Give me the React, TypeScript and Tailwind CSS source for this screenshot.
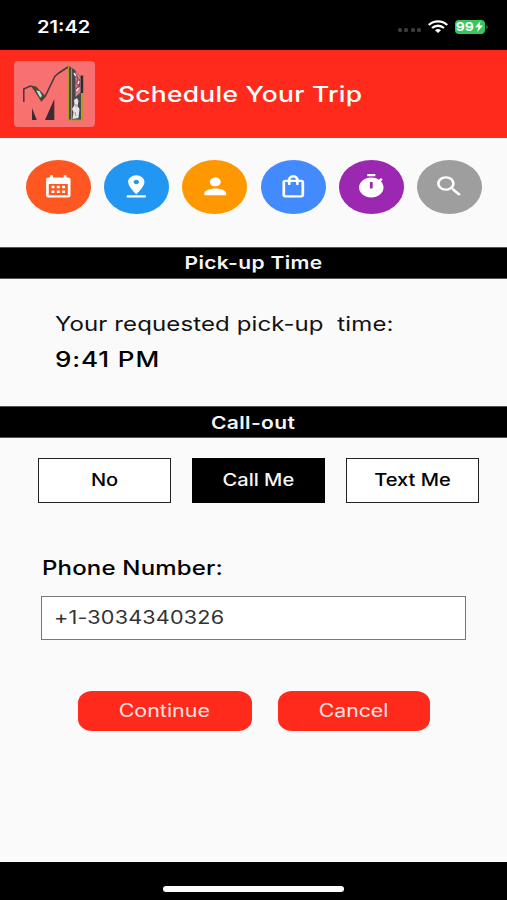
import type { ReactNode } from "react";

function Glyph({ children }: { children: ReactNode }) {
  return (
    <svg viewBox="0 0 24 24" preserveAspectRatio="none" className="h-[26.7px] w-[32.6px]" fill="#fff">
      {children}
    </svg>
  );
}

function Step({ color, children }: { color: string; children: ReactNode }) {
  return (
    <button className={`flex h-[53.5px] w-[65px] items-center justify-center rounded-[50%] ${color}`}>
      {children}
    </button>
  );
}

function SectionBar({ children }: { children: ReactNode }) {
  return (
    <div className="flex h-8 shrink-0 items-center justify-center border-y border-[#555] bg-black pt-px font-semibold text-[17.5px] leading-none text-[#f5f5f5]">
      {children}
    </div>
  );
}

function Logo() {
  return (
    <svg viewBox="0 0 81 66" className="h-[66px] w-[81px] rounded-[4px] bg-[#f87171]">
      <path d="M9.800 41V28l6.500-3 5.500 1.500 6 12.500 3.500-4 9.500-19.500 4-3.500L54 6" fill="none" stroke="#4a3a3b" strokeWidth="1.6" />
      <path d="M17 25l5.500 1 8.500 8.500-3.600 6.500L23 34z" fill="#4a4a2c" />
      <path d="M22.300 29.500l3.200.5 2.600 5-2 1.500z" fill="#b5e2f7" />
      <path d="M18 47l4.800 12H18zM40.300 38v21H31z" fill="#3a2c33" />
      <path d="M54 4.500l7 4.500 6 8v42H54z" fill="#4b464a" />
      <path d="M61.500 10l5.500 7v14l-5.500 5z" fill="#c9868d" />
      <path d="M66.600 14.500h2.600V32h-2.600z" fill="#2d2a30" />
      <path d="M54.500 5v54M57.500 7.500V59M68.300 32v27H54" fill="none" stroke="#a89b22" strokeWidth="1.1" />
      <path d="M62.500 14l1.500 4-1.500 4 2.500 3-3 3M65.500 18v8" fill="none" stroke="#a83850" strokeWidth="1.2" />
      <path d="M65 20l-1 3M64.500 27l-2 3M60 12l1.500 3" fill="none" stroke="#fff" strokeWidth="1.3" />
      <path d="M60 39l3-2 1.500 3-1 5 2 3-1 9-6 1 1-7-1.500-3 2.500-4z" fill="#e5e3e3" />
      <path d="M62 43v3M61 51l1 4" stroke="#9d989c" strokeWidth="1" />
    </svg>
  );
}

export default function App() {
  return (
    <div className="flex h-[900px] w-[507px] flex-col overflow-hidden bg-[#fafafa] font-['Inter',sans-serif] text-black">
      <div className="flex h-[49.5px] shrink-0 items-center bg-black pl-[37px] pr-[19px] pt-[4px] text-white">
        <span className="origin-left scale-x-[1.18] whitespace-pre pt-px text-[17px] leading-none font-semibold">21:42</span>
        <div className="ml-auto flex items-center">
          <div className="mr-[7px] mt-[7px] flex gap-[2.5px]">
            <i className="size-[4px] rounded-[1.5px] bg-[#3c3c3c]" />
            <i className="size-[4px] rounded-[1.5px] bg-[#3c3c3c]" />
            <i className="size-[4px] rounded-[1.5px] bg-[#3c3c3c]" />
            <i className="size-[4px] rounded-[1.5px] bg-[#3c3c3c]" />
          </div>
          <svg viewBox="0 0 20 13" className="mr-[7px] h-[13px] w-5" fill="none" stroke="#fff" strokeWidth="2.3">
            <path d="M.8 5C6 .2 14 .2 19.200 5M4 8c3.500-3 8.500-3 12 0" />
            <path d="M7 10.200c1.700-1.500 4.300-1.500 6 0l-3 2.800z" fill="#fff" stroke="none" />
          </svg>
          <div className="flex h-[13.5px] w-[30px] items-center justify-center rounded-[4px] bg-[#34c759]">
            <span className="scale-x-[1.15] text-[12px] leading-none font-bold">99</span>
            <svg viewBox="0 0 8 11" className="ml-[2px] h-[11px] w-[8px]" fill="#fff">
              <path d="M5.500 0L0 6.200h3.300L2.300 11 8 4.600H4.600z" />
            </svg>
          </div>
          <i className="ml-[1px] h-[4px] w-[2px] rounded-r-full bg-[#444]" />
        </div>
      </div>

      <header className="flex h-[88.5px] shrink-0 items-center bg-[#ff2a1b] pl-[14.400px] text-white">
        <Logo />
        <h1 className="ml-[23px] origin-left scale-x-[1.2] whitespace-pre text-[22px] leading-none font-medium tracking-[0.22px]">Schedule Your Trip</h1>
      </header>

      <nav className="flex h-[108.5px] shrink-0 justify-between pl-[26px] pr-[25px] pt-[22px]">
        <Step color="bg-[#ff5722]">
          <Glyph>
            <path
              fillRule="evenodd"
              d="M6 2h2v2h8V2h2v2h1a2 2 0 0 1 2 2v14a2 2 0 0 1-2 2H5a2 2 0 0 1-2-2V6a2 2 0 0 1 2-2h1zM5 9.800V20h14V9.800zM7 11.500h2.200v2.300H7zm3.900 0h2.200v2.300h-2.200zm3.900 0H17v2.300h-2.200zM7 15.700h2.200V18H7zm3.900 0h2.200V18h-2.200zm3.900 0H17V18h-2.200z"
            />
          </Glyph>
        </Step>
        <Step color="bg-[#2196f3]">
          <Glyph>
            <path d="M18 8c0-3.310-2.690-6-6-6S6 4.690 6 8c0 4.500 6 11 6 11s6-6.500 6-11zm-8 0c0-1.100.9-2 2-2s2 .9 2 2-.89 2-2 2c-1.100 0-2-.9-2-2zM5 20v2h14v-2H5z" />
          </Glyph>
        </Step>
        <Step color="bg-[#ff9800]">
          <Glyph>
            <path d="M12 12c2.210 0 4-1.790 4-4s-1.790-4-4-4-4 1.790-4 4 1.790 4 4 4zm0 2c-2.670 0-8 1.340-8 4v2h16v-2c0-2.660-5.330-4-8-4z" />
          </Glyph>
        </Step>
        <Step color="bg-[#448aff]">
          <Glyph>
            <path d="M18 6h-2c0-2.210-1.790-4-4-4S8 3.790 8 6H6c-1.100 0-2 .9-2 2v12c0 1.100.9 2 2 2h12c1.100 0 2-.9 2-2V8c0-1.100-.9-2-2-2zm-6-2c1.100 0 2 .9 2 2h-4c0-1.100.9-2 2-2zm6 16H6V8h2v2c0 .55.450 1 1 1s1-.45 1-1V8h4v2c0 .55.450 1 1 1s1-.45 1-1V8h2v12z" />
          </Glyph>
        </Step>
        <Step color="bg-[#9c27b0]">
          <Glyph>
            <path
              fillRule="evenodd"
              d="M15 1H9v2h6V1zm4.030 6.390l1.420-1.420c-.43-.51-.9-.99-1.410-1.410l-1.420 1.420C16.070 4.740 14.120 4 12 4c-4.970 0-9 4.030-9 9s4.020 9 9 9 9-4.030 9-9c0-2.120-.74-4.070-1.970-5.610zM13 14h-2V8h2v6z"
            />
          </Glyph>
        </Step>
        <Step color="bg-[#9e9e9e]">
          <Glyph>
            <path d="M15.500 14h-.79l-.28-.27C15.410 12.590 16 11.110 16 9.500 16 5.910 13.090 3 9.500 3S3 5.910 3 9.500 5.910 16 9.500 16c1.610 0 3.090-.59 4.230-1.570l.27.280v.79l5 4.990L20.490 19l-4.990-5zm-6 0C7.010 14 5 11.990 5 9.500S7.010 5 9.500 5 14 7.010 14 9.500 11.990 14 9.500 14z" />
          </Glyph>
        </Step>
      </nav>

      <SectionBar>
        <span className="scale-x-[1.2] whitespace-pre tracking-[0.3px]">Pick-up Time</span>
      </SectionBar>

      <section className="flex h-[127.500px] shrink-0 flex-col items-start pl-[55px] pt-[35.500px]">
        <p className="origin-left scale-x-[1.2] whitespace-pre text-[20px] leading-5 tracking-[0.09px] text-[#111]">{"Your requested pick-up  time:"}</p>
        <p className="mt-[16px] origin-left scale-x-[1.24] whitespace-pre text-[21px] leading-5 font-medium tracking-[0.7px]">9:41 PM</p>
      </section>

      <SectionBar>
        <span className="scale-x-[1.2] whitespace-pre tracking-[0.3px]">Call-out</span>
      </SectionBar>

      <div className="mt-5 flex h-[44.500px] shrink-0 gap-[21.500px] pl-[38.400px] text-[17px] leading-none font-medium">
        <button className="flex w-[132.500px] items-center justify-center border border-[#222] bg-white">
          <span className="scale-x-[1.18] whitespace-pre">No</span>
        </button>
        <button className="flex w-[132.500px] items-center justify-center bg-black text-[#f5f5f5]">
          <span className="scale-x-[1.18] whitespace-pre">Call Me</span>
        </button>
        <button className="flex w-[132.500px] items-center justify-center border border-[#222] bg-white">
          <span className="scale-x-[1.18] whitespace-pre">Text Me</span>
        </button>
      </div>

      <div className="mt-[55px] flex shrink-0 flex-col items-start pl-[41.400px]">
        <label className="ml-[0.5px] origin-left scale-x-[1.2] whitespace-pre text-[20px] leading-5 font-medium tracking-[0.15px]">Phone Number:</label>
        <div className="mt-[18px] flex h-[44.500px] w-[425px] items-center border border-[#777] bg-white pl-[12px] text-[18px] leading-none text-[#333]">
          <span className="origin-left scale-x-[1.2] whitespace-pre tracking-[0.15px]">+1-3034340326</span>
        </div>
      </div>

      <div className="mt-[50.500px] flex h-10 shrink-0 gap-[26.500px] pl-[78px] text-[18px] leading-none text-[#ffe3e0]">
        <button className="flex w-[173.500px] items-center justify-center rounded-[14px/12px] bg-[#ff2a1b]">
          <span className="scale-x-[1.19] whitespace-pre">Continue</span>
        </button>
        <button className="flex w-[151.500px] items-center justify-center rounded-[14px/12px] bg-[#ff2a1b]">
          <span className="scale-x-[1.18] whitespace-pre">Cancel</span>
        </button>
      </div>

      <footer className="mt-auto flex h-[38px] shrink-0 justify-center bg-black pt-[23.500px]">
        <div className="h-[6px] w-[181px] rounded-full bg-white" />
      </footer>
    </div>
  );
}
